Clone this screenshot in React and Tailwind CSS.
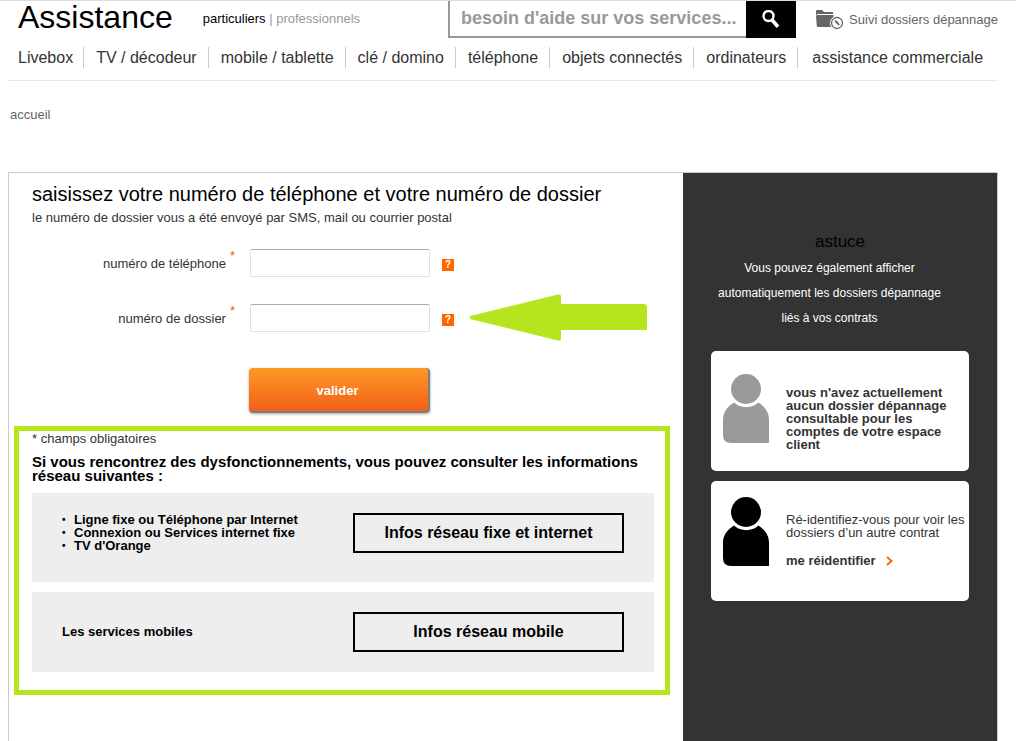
// src/App.jsx
import React from 'react';

const navItems = [
  'Livebox',
  'TV / décodeur',
  'mobile / tablette',
  'clé / domino',
  'téléphone',
  'objets connectés',
  'ordinateurs',
  'assistance commerciale',
];

const PersonIcon = ({ className }) => (
  <svg className={className} width="46" height="69" viewBox="0 0 46 69" fill="currentColor" aria-hidden="true">
    <circle cx="23" cy="15" r="15" />
    <path d="M11 28.5A18.5 18.5 0 0 0 35.500 28.500C42 33 46 38 46 46V69H8Q0 69 0 61V46C0 38 4 33 11 28.500Z" />
  </svg>
);

const Field = ({ id, label, children }) => (
  <div className="relative flex h-7">
    <label htmlFor={id} className="flex w-[218px] justify-end pr-[15px] leading-[30px]">
      {label}
      <sup className="static ml-1 text-[13px] leading-[13px] text-[#ff4a1c]">*</sup>
    </label>
    <input
      id={id}
      type="text"
      className="w-[180px] rounded-[2px] border border-[#e0e0e8] border-t-[#a9a9b1] bg-white px-2 outline-none"
    />
    <button
      type="button"
      aria-label="aide"
      className="mb-[6px] ml-3 h-3 w-3 self-end bg-[#ff6600] text-center text-[10px] font-bold leading-3 text-white"
    >
      ?
    </button>
    {children}
  </div>
);

const App = () => {
  return (
    <div className="flex min-h-screen flex-col border-t border-[#ddd] bg-white pl-2 pr-[18px] font-['Liberation_Sans',Arial,sans-serif] text-[13px] text-[#333]">
      {/* Header */}
      <header>
        <div className="flex h-[37px] items-start">
          <div className="flex w-[440px] shrink-0 pl-[10px]">
            <h1 className="text-[32px] leading-8 text-black">Assistance</h1>
            <p className="ml-[30px] leading-9 text-[#999]">
              <a href="#" className="text-black">particuliers</a> | <a href="#">professionnels</a>
            </p>
          </div>
          <form className="flex h-full w-[348px] shrink-0" onSubmit={(e) => e.preventDefault()}>
            <input
              type="text"
              aria-label="rechercher"
              placeholder="besoin d'aide sur vos services..."
              className="min-w-0 flex-1 border-b-2 border-l-2 border-[#999] pl-[11px] text-[18px] font-bold outline-none placeholder:text-[#999]"
            />
            <button type="submit" aria-label="lancer la recherche" className="flex w-[50px] items-center justify-center bg-black text-white">
              <svg width="20" height="20" viewBox="0 0 20 20" fill="none" stroke="currentColor">
                <circle cx="7.500" cy="6" r="5" strokeWidth="2.400" />
                <path d="M10.800 9.800L17 16.800" strokeWidth="3.600" />
              </svg>
            </button>
          </form>
          <a href="#" className="ml-auto flex items-center gap-[5px] whitespace-nowrap leading-[37px] text-[#666]">
            <svg width="28" height="20" viewBox="0 0 28 20" aria-hidden="true">
              <path d="M0 1Q0 0 1 0H6L8 2H17V4H1V5H0Z" fill="#666" />
              <path d="M1 5H17.500V17H2Q1 17 0.800 16L0 6Z" fill="#666" />
              <circle cx="21" cy="13" r="7" fill="#fff" />
              <circle cx="21" cy="13" r="5.500" fill="#fff" stroke="#666" strokeWidth="1.300" />
              <path d="M18.500 10L20.800 10.800L23.800 14.600L22.800 15.600L19.400 12.600Z" fill="#666" />
            </svg>
            Suivi dossiers dépannage
          </a>
        </div>

        <nav className="mt-[9px] border-b border-[#eaeaea] pb-3">
          <ul className="flex whitespace-nowrap text-base leading-[21px]">
            {navItems.map((item) => (
              <li key={item} className="border-r border-[#ccc] pl-3 pr-[11px] first:pl-[10px] first:pr-[10px] last:border-r-0 last:pl-[14px]">
                <a href="#">{item}</a>
              </li>
            ))}
          </ul>
        </nav>
      </header>

      <p className="mt-6 pl-[2px] leading-5 text-[#666]">
        <a href="#">accueil</a>
      </p>

      {/* Content */}
      <main className="mt-[47px] flex flex-1 border border-b-0 border-[#ccc]">
        <div className="min-w-0 flex-1 pl-[5px] pr-[13px] pt-2">
          <form className="pl-[18px]" onSubmit={(e) => e.preventDefault()}>
            <h2 className="text-[20px] leading-[26px] text-black">
              saisissez votre numéro de téléphone et votre numéro de dossier
            </h2>
            <p className="leading-[22px]">
              le numéro de dossier vous a été envoyé par SMS, mail ou courrier postal
            </p>

            <div className="mt-5 flex flex-col gap-[27px]">
              <Field id="telephone" label="numéro de téléphone" />
              <Field id="dossier" label="numéro de dossier">
                {/* Arrow pointing at the help button */}
                <svg className="absolute -top-[10px] left-[438px]" width="177" height="47" viewBox="0 0 177 47" fill="#b5e61d" aria-hidden="true">
                  <path d="M0 22L88 0.500Q91 0 91 2V10H175L177 12V36H91V45Q91 47 88 46.500L0 25Z" />
                </svg>
              </Field>
            </div>

            <button
              type="submit"
              className="ml-[217px] mt-9 h-[45px] w-[181px] rounded-[4px] border-b-2 border-r-2 border-[#7d7d7d] bg-gradient-to-b from-[#fd9827] to-[#f15f18] pr-[2px] pt-[3px] font-bold text-white shadow-[0_1px_3px_rgba(0,0,0,0.35)]"
            >
              valider
            </button>
          </form>

          {/* Network information */}
          <section className="mt-[13px] border-[5px] border-[#b5e61d] pb-[18px] pl-[13px] pr-[11px]">
            <p className="leading-4">* champs obligatoires</p>
            <h3 className="mt-2 text-[15px] font-bold leading-[14px] text-black">
              Si vous rencontrez des dysfonctionnements, vous pouvez consulter les informations réseau suivantes :
            </h3>

            <div className="mt-[10px] flex justify-between bg-[#eee] pb-[29px] pl-[30px] pr-[30px] pt-5 font-bold text-black">
              <ul className="leading-[13px]">
                {['Ligne fixe ou Téléphone par Internet', 'Connexion ou Services internet fixe', "TV d'Orange"].map((text) => (
                  <li key={text} className="flex">
                    <span className="w-3 text-[10px]">•</span>
                    {text}
                  </li>
                ))}
              </ul>
              <button type="button" className="h-10 w-[271px] border-2 border-black text-base font-bold">
                Infos réseau fixe et internet
              </button>
            </div>

            <div className="mt-[10px] flex items-center justify-between bg-[#eee] px-[30px] py-5 font-bold text-black">
              <p>Les services mobiles</p>
              <button type="button" className="h-10 w-[271px] border-2 border-black text-base font-bold">
                Infos réseau mobile
              </button>
            </div>
          </section>
        </div>

        {/* Sidebar */}
        <aside className="w-[314px] shrink-0 bg-[#333] px-7 pt-[59px]">
          <h2 className="text-center text-[17px] leading-5 text-black">astuce</h2>
          <p className="mt-1 w-[237px] text-center text-[12px] leading-[25px] text-white">
            Vous pouvez également afficher automatiquement les dossiers dépannage liés à vos contrats
          </p>

          <div className="mt-5 flex h-[120px] gap-[17px] rounded-[5px] bg-white pl-3">
            <PersonIcon className="mt-[23px] shrink-0 text-[#9c9a98]" />
            <p className="mt-[35px] font-bold leading-[13px]">
              vous n'avez actuellement aucun dossier dépannage consultable pour les comptes de votre espace client
            </p>
          </div>

          <div className="mt-[10px] flex h-[120px] gap-[17px] rounded-[5px] bg-white pl-3">
            <PersonIcon className="mt-4 shrink-0 text-black" />
            <div className="mt-8 leading-[13px]">
              <p>Ré-identifiez-vous pour voir les dossiers d’un autre contrat</p>
              <a href="#" className="mt-[14px] flex items-center gap-[10px] font-bold leading-4">
                me réidentifier
                <svg width="7" height="10" viewBox="0 0 7 10" fill="none" stroke="#ff6600" strokeWidth="2" aria-hidden="true">
                  <path d="M1 1L5.500 5L1 9" />
                </svg>
              </a>
            </div>
          </div>
        </aside>
      </main>
    </div>
  );
};

export default App;
